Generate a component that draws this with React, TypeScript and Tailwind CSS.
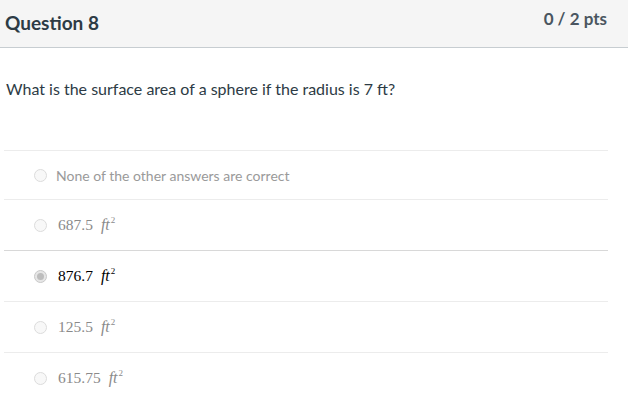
import React from 'react';

type Answer = { id: number; label?: string; value?: string; selected?: boolean };

const answers: Answer[] = [
  { id: 1, label: 'None of the other answers are correct' },
  { id: 2, value: '687.5' },
  { id: 3, value: '876.7', selected: true },
  { id: 4, value: '125.5' },
  { id: 5, value: '615.75' },
];

function Radio({ checked }: { checked?: boolean }) {
  if (checked) {
    return (
      <span className="flex h-[13px] w-[13px] shrink-0 items-center justify-center rounded-full border border-[#c9c9c9] bg-[#e6e6e6]">
        <span className="h-[7px] w-[7px] rounded-full bg-[#bdbdbd]" />
      </span>
    );
  }
  return <span className="h-[13px] w-[13px] shrink-0 rounded-full border border-[#dcdcdc] bg-[#f8f8f8]" />;
}

function MathValue({ value, selected }: { value: string; selected?: boolean }) {
  return (
    <span
      className={`ml-[2px] font-['Liberation_Serif',serif] text-[15.5px] ${selected ? 'text-black' : 'text-[#8a8a8a]'}`}
    >
      {value}
      <span className="ml-[8px] text-[16px] italic">ft</span>
      <sup className="-top-[7px] ml-[1px] text-[9px]">2</sup>
    </span>
  );
}

export default function App() {
  return (
    <div className="h-[420px] w-[628px] bg-white font-['Lato','Noto_Sans',sans-serif] text-[#2d3b45]">
      <div className="flex h-[48px] items-start justify-between border-b border-[#c7cdd1] bg-[#f5f5f5] pl-[5px] pr-[21px]">
        <h2 className="pt-[11px] text-[19px] font-bold leading-[24px]">Question 8</h2>
        <span className="pt-[8px] text-[17px] font-bold leading-[22px] text-[#4a5560]">0 / 2 pts</span>
      </div>

      <p className="px-[6px] pt-[29px] text-[16px] leading-[24px]">
        What is the surface area of a sphere if the radius is 7 ft?
      </p>

      <div className="ml-[4px] mt-[49px] w-[604px]">
        {answers.map((a, i) => (
          <div
            key={a.id}
            className={`flex items-center gap-[9px] border-t pl-[30px] ${i === 0 ? 'h-[49px]' : 'h-[51px]'} ${
              a.selected ? 'border-[#d8d8d8]' : 'border-[#ececec]'
            }`}
          >
            <Radio checked={a.selected} />
            {a.label ? (
              <span className="text-[14px] text-[#9a9a9a]">{a.label}</span>
            ) : (
              <MathValue value={a.value!} selected={a.selected} />
            )}
          </div>
        ))}
      </div>
    </div>
  );
}
